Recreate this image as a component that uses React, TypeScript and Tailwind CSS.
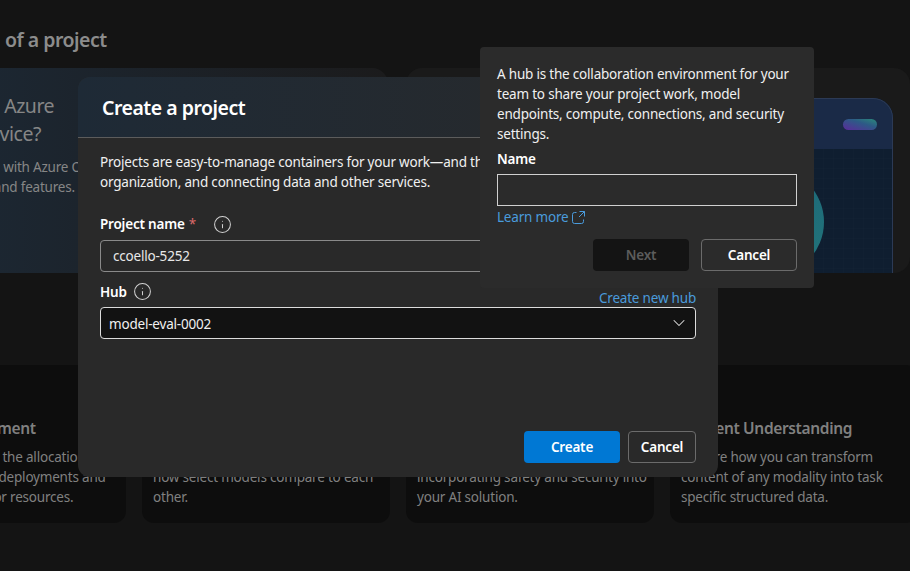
import React from 'react';
import { Info, ChevronDown } from 'lucide-react';

const tiles = [
  {
    title: 'Quota Management',
    lines: ['Monitor and track the allocation', 'for quotas across deployments and', 'and better monitor resources.'],
    width: 'w-[248px] ml-[-122px]',
  },
  {
    title: 'Model Benchmarks',
    lines: ['Assess and review', 'how select models compare to each', 'other.'],
    width: 'w-[248px]',
  },
  {
    title: 'Responsible AI',
    lines: ['Learn more about', 'incorporating safety and security into', 'your AI solution.'],
    width: 'w-[248px]',
  },
  {
    title: 'Content Understanding',
    lines: ['Explore how you can transform', 'content of any modality into task', 'specific structured data.'],
    width: 'w-[248px]',
  },
];

function OpenIcon() {
  return (
    <svg width="13" height="13" viewBox="0 0 13 13" fill="none" stroke="currentColor" strokeWidth="1">
      <path d="M4.5 1.5H2.5a2 2 0 0 0-2 2v7a2 2 0 0 0 2 2h7a2 2 0 0 0 2-2v-2" />
      <path d="M7.5.5h5v5M12.5.5 7 6" />
    </svg>
  );
}

function Illustration() {
  return (
    <svg width="300" height="175" viewBox="0 0 300 175" className="block">
      <defs>
        <linearGradient id="pill" x1="0" y1="1" x2="1" y2="0">
          <stop offset="0" stopColor="#5b2a9a" />
          <stop offset="0.6" stopColor="#2d5a86" />
          <stop offset="1" stopColor="#2a8a7a" />
        </linearGradient>
        <linearGradient id="orb" x1="0" y1="0" x2="1" y2="1">
          <stop offset="0" stopColor="#1a5f78" />
          <stop offset="1" stopColor="#22757a" />
        </linearGradient>
        <pattern id="grid" width="10" height="10" patternUnits="userSpaceOnUse">
          <path d="M10 0H0V10" fill="none" stroke="#142233" strokeWidth="1" />
        </pattern>
      </defs>
      <path d="M0 0H280a20 20 0 0 1 20 20V175H0Z" fill="#0f1e30" />
      <rect y="51" width="300" height="124" fill="url(#grid)" />
      <path d="M0 0H280a20 20 0 0 1 20 20V51H0Z" fill="#1a2a47" />
      <path d="M0 .5H280a19.5 19.5 0 0 1 19.5 19.5V175" fill="none" stroke="#2c3a55" />
      <rect x="250" y="21" width="34" height="11" rx="5.5" fill="url(#pill)" />
      <circle cx="177" cy="124" r="54" fill="url(#orb)" />
    </svg>
  );
}

export default function App() {
  return (
    <div className="relative h-[571px] w-[910px] overflow-hidden bg-[#141414] font-['Noto_Sans',sans-serif] text-[13.5px] leading-5 tracking-[-0.2px] text-white">
      {/* Page behind the dialog */}
      <div className="flex flex-col">
        <h2 className="ml-[-87px] mt-[26px] h-[28px] whitespace-nowrap text-[19.5px] font-semibold leading-[28px] tracking-[-0.5px] text-[#8c8c8c]">
          Anatomy&nbsp; of a project
        </h2>
        <div className="mt-[14px] flex h-[205px] gap-[18px]">
          <div className="ml-[-122px] w-[510px] shrink-0 rounded-2xl bg-gradient-to-r from-[#1c2a38] to-[#1b1b1c] pl-[20px] pt-[24px] text-[#868686]">
            <p className="ml-[11px] whitespace-nowrap text-[19.5px] leading-[28px] tracking-[-0.5px]">What is an Azure</p>
            <p className="ml-[-25px] whitespace-nowrap text-[19.5px] leading-[28px] tracking-[-0.5px]">AI Foundry service?</p>
            <p className="ml-[33px] mt-[9px] whitespace-nowrap">Get started with Azure OpenAI</p>
            <p className="ml-[47px] whitespace-nowrap">models and features.</p>
          </div>
          <div className="flex w-[504px] shrink-0 items-end justify-end rounded-2xl bg-[#1a1a1a] pr-[17px]">
            <Illustration />
          </div>
        </div>
        <div className="mt-[92px] flex h-[158px] gap-[16px]">
          {tiles.map((t) => (
            <div
              key={t.title}
              className={`${t.width} flex shrink-0 flex-col justify-end rounded-xl bg-[#0d0d0d] px-[11px] pb-[16px] text-[#808080]`}
            >
              <h3 className="mb-[8px] whitespace-nowrap text-[15.5px] font-semibold leading-[22px] tracking-[-0.35px]">{t.title}</h3>
              {t.lines.map((l) => (
                <p key={l} className="whitespace-nowrap">{l}</p>
              ))}
            </div>
          ))}
        </div>
      </div>

      {/* Create a project dialog */}
      <div className="absolute left-[78px] top-[77px] flex h-[400px] w-[640px] flex-col overflow-hidden rounded-xl bg-[#292929]">
        <div className="flex h-[61px] shrink-0 items-center border-b border-[#5c5c5c] bg-gradient-to-r from-[#1e2a36] to-[#292929] pl-[24px] pt-[1px]">
          <h1 className="text-[19.5px] font-semibold leading-[28px] tracking-[-0.5px]">Create a project</h1>
        </div>
        <div className="flex flex-1 flex-col px-[22px] pt-[14px]">
          <p className="text-[#f0f0f0]">
            Projects are easy-to-manage containers for your work—and the key to collaboration across your organization, and connecting data and other services.
          </p>
          <div className="mt-[21px] flex h-[22px] items-center">
            <label className="font-semibold">Project name</label>
            <span className="ml-[4px] text-[#dc6a6a]">*</span>
            <Info size={19} strokeWidth={1.3} className="ml-[17px] text-[#d0d0d0]" />
          </div>
          <div className="mt-[5px] flex h-[32px] items-center rounded border border-[#8a8a8a] pl-[12px] text-[#e8e8e8]">
            ccoello-5252
          </div>
          <div className="mt-[8px] flex h-[27px] items-start justify-between">
            <div className="flex h-[22px] items-center gap-[6px]">
              <label className="pt-[1px] font-semibold">Hub</label>
              <Info size={19} strokeWidth={1.3} className="text-[#d0d0d0]" />
            </div>
            <a className="mt-[8px] text-[#4a9bdc]">Create new hub</a>
          </div>
          <div className="flex h-[32px] items-center justify-between rounded-sm border border-[#dcdcdc] bg-[#121212] pl-[8px] pr-[6px] text-[#f0f0f0]">
            <span className="pt-[1px]">model-eval-0002</span>
            <ChevronDown size={20} strokeWidth={1.25} className="text-[#e0e0e0]" />
          </div>
          <div className="mt-auto flex justify-end gap-[8px] pb-[14px]">
            <button className="h-[32px] w-[96px] rounded bg-[#0078d4] font-semibold">Create</button>
            <button className="h-[32px] w-[68px] rounded border border-[#6b6b6b] font-semibold">Cancel</button>
          </div>
        </div>
      </div>

      {/* Hub callout */}
      <div className="absolute left-[480px] top-[47px] flex h-[241px] w-[334px] flex-col rounded bg-[#2b2b2b] px-[17px] pt-[17px]">
        <p className="text-[#f0f0f0]">
          A hub is the collaboration environment for your team to share your project work, model endpoints, compute, connections, and security settings.
        </p>
        <label className="mt-[5px] font-semibold">Name</label>
        <div className="mt-[5px] h-[32px] shrink-0 border border-[#d0d0d0]" />
        <a className="mt-[1px] flex items-center gap-[4px] text-[#4a9bdc]">
          Learn more
          <OpenIcon />
        </a>
        <div className="mt-[12px] flex justify-end gap-[12px]">
          <button className="h-[32px] w-[96px] rounded bg-[#141414] font-semibold text-[#5c5c5c]">Next</button>
          <button className="h-[32px] w-[96px] rounded border border-[#6b6b6b] font-semibold">Cancel</button>
        </div>
      </div>
    </div>
  );
}
